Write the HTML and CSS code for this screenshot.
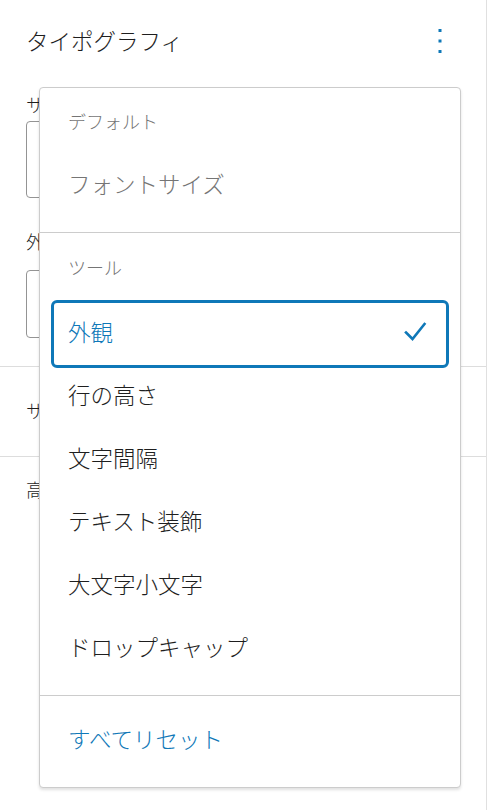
FILE: index.html
```html
<!DOCTYPE html>
<html lang="ja">
<head>
<meta charset="utf-8">
<title>タイポグラフィ</title>
<link rel="stylesheet" href="styles.css">
</head>
<body>
<div class="panel">
  <section class="section section-main">
    <div class="header">
      <h2 class="title">タイポグラフィ</h2>
      <button class="kebab" aria-label="オプション">
        <svg width="6" height="26" viewBox="0 0 6 26"><rect x="1.5" y="1" width="3" height="3" fill="#0f78b8"/><rect x="1.5" y="11.5" width="3" height="3" fill="#0f78b8"/><rect x="1.5" y="22" width="3" height="3" fill="#0f78b8"/></svg>
      </button>
    </div>
    <div class="label label-first">サイズ</div>
    <div class="input input-tall"></div>
    <div class="label label-second">外観</div>
    <div class="input input-short"></div>
  </section>
  <section class="section section-row">
    <div class="label">サイズ</div>
  </section>
  <section class="section section-last">
    <div class="label">高さ</div>
  </section>

  <div class="menu" role="menu">
    <div class="group group-first">
      <div class="group-label">デフォルト</div>
      <div class="item item-muted">フォントサイズ</div>
    </div>
    <div class="group group-tools">
      <div class="group-label">ツール</div>
      <div class="item item-selected">
        <span>外観</span>
        <svg class="check" width="24" height="24" viewBox="0 0 24 24"><path d="M3 12.5 L9.5 19 L21.5 4" fill="none" stroke="#0f78b8" stroke-width="2.6" stroke-linecap="square" stroke-linejoin="miter"/></svg>
      </div>
      <div class="item">行の高さ</div>
      <div class="item">文字間隔</div>
      <div class="item">テキスト装飾</div>
      <div class="item">大文字小文字</div>
      <div class="item">ドロップキャップ</div>
    </div>
    <div class="group group-reset">
      <div class="item item-link">すべてリセット</div>
    </div>
  </div>
</div>
</body>
</html>
```

FILE: styles.css
```css
* {
  box-sizing: border-box;
}

html, body {
  margin: 0;
  padding: 0;
  background: #ffffff;
}

body {
  font-family: "Noto Sans CJK JP", "Noto Sans", sans-serif;
  font-weight: 300;
  color: #1e1e1e;
}

.panel {
  position: relative;
  width: 487px;
  height: 810px;
  border-right: 1px solid #e0e0e0;
  overflow: hidden;
}

.section {
  padding: 0 26px;
  border-bottom: 1px solid #dddddd;
}

.section-main {
  height: 367px;
}

.header {
  height: 82px;
  padding-bottom: 3px;
  display: flex;
  align-items: center;
  justify-content: space-between;
}

.title {
  margin: 0;
  font-size: 22.5px;
  font-weight: 300;
  line-height: 30px;
}

.kebab {
  width: 44px;
  height: 44px;
  margin-right: -2px;
  margin-top: 3px;
  padding: 0;
  border: 0;
  background: transparent;
  display: flex;
  align-items: center;
  justify-content: center;
}

.label {
  font-size: 18px;
  line-height: 24px;
}

.label-first {
  margin-top: 10px;
}

.input {
  border: 1px solid #949494;
  border-radius: 4px;
  margin-top: 5px;
}

.input-tall {
  height: 77px;
}

.label-second {
  margin-top: 31px;
}

.input-short {
  margin-top: 17px;
  height: 68px;
}

.section-row {
  height: 90px;
  display: flex;
  align-items: center;
  padding-bottom: 3px;
}

.section-last {
  border-bottom: 0;
  padding-top: 20px;
}

.menu {
  position: absolute;
  left: 39px;
  top: 87px;
  width: 422px;
  height: 701px;
  background: #ffffff;
  border: 1px solid #cccccc;
  border-radius: 4px;
  box-shadow: 0 2px 3px rgba(0, 0, 0, 0.12);
}

.group {
  padding: 16px 11px;
}

.group + .group {
  border-top: 1px solid #cccccc;
}

.group-label {
  height: 36px;
  padding: 0 17px 2px;
  display: flex;
  align-items: center;
  font-size: 18px;
  color: #757575;
}

.group-first .group-label {
  margin-bottom: 14px;
}

.group-tools {
  padding-top: 17px;
}

.group-tools .group-label {
  margin-bottom: 14px;
}

.item {
  height: 63px;
  padding: 0 17px 4px;
  display: flex;
  align-items: center;
  justify-content: space-between;
  font-size: 22.5px;
  color: #1e1e1e;
}

.group-first .item {
  height: 62px;
}

.item-muted {
  color: #757575;
}

.item-selected {
  color: #0f78b8;
  border: 3px solid #0f78b8;
  border-radius: 6px;
  padding: 0 14px 6px;
  height: 68px;
  margin-bottom: -4px;
}

.check {
  margin-right: 5px;
  margin-top: 2px;
}

.group-reset {
  padding-top: 12px;
}

.item-link {
  color: #0f78b8;
}
```
